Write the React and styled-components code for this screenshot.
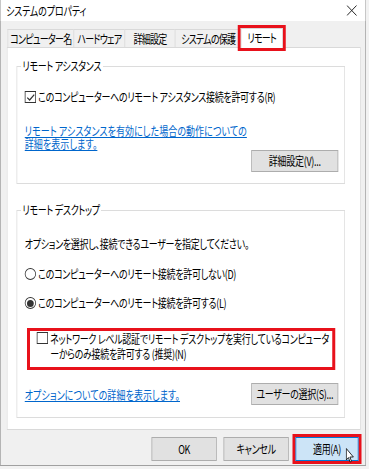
import React from 'react';
import styled, { createGlobalStyle } from 'styled-components';

// The reference shot is squeezed sideways, so the dialog is laid out at its
// natural width and compressed horizontally as a whole.
const SQUEEZE = 0.75;

const GlobalStyle = createGlobalStyle`
    html, body {
        margin: 0;
        padding: 0;
        background: #f2f2f2;
        overflow: hidden;
    }
    body {
        font-family: "Noto Sans CJK JP", "Noto Sans", sans-serif;
        font-size: 12px;
        font-feature-settings: "palt";
        color: #000;
    }
`;

const Stage = styled.div`
    width: 488px;
    transform: scaleX(${SQUEEZE});
    transform-origin: 0 0;
`;

const Window = styled.div`
    width: 488px;
    height: 466px;
    box-sizing: border-box;
    background: #f0f0f0;
    border: 1px solid #a0a0a0;
    border-width: 0 1.4px 1px 1.4px;
    display: flex;
    flex-direction: column;
`;

const TitleBar = styled.div`
    height: 21px;
    background: #fff;
    display: flex;
    align-items: center;
    justify-content: space-between;
    padding: 0 11px 0 7px;
    line-height: 14px;
`;

const Title = styled.span`
    letter-spacing: -0.2px;
`;

const Body = styled.div`
    flex: 1;
    display: flex;
    flex-direction: column;
    padding: 8px 6px 0 8px;
`;

const TabRow = styled.div`
    display: flex;
    align-items: flex-end;
    height: 18px;
    padding-left: 1px;
`;

const Tab = styled.div`
    position: relative;
    width: ${({ w }) => w}px;
    height: ${({ active }) => (active ? '20px' : '18px')};
    box-sizing: border-box;
    margin-right: -1px;
    margin-bottom: ${({ active }) => (active ? '-1px' : '0')};
    border: 1px solid #d9d9d9;
    border-width: 1px 1.3px 0 1.3px;
    background: ${({ active }) => (active ? '#fff' : '#f0f0f0')};
    line-height: 17px;
    text-align: center;
    white-space: nowrap;
    letter-spacing: -1px;
    z-index: ${({ active }) => (active ? 2 : 1)};
    box-shadow: ${({ mark }) =>
        mark ? '0 0 0 3px #e8111b, 1px 0 0 3px #e8111b, -1px 0 0 3px #e8111b' : 'none'};
`;

const Panel = styled.div`
    height: 383px;
    box-sizing: border-box;
    background: #fff;
    border: 1px solid #d9d9d9;
    border-width: 1px 1.3px;
    padding: 11px 20px 0 12px;
    display: flex;
    flex-direction: column;
`;

const Group = styled.fieldset`
    margin: ${({ gap }) => gap || 0}px 0 0 0;
    padding: 0 8px ${({ bottom }) => bottom}px 10px;
    border: 1px solid #dcdcdc;
    border-width: 1px 1.3px;
    min-width: 0;
    display: flex;
    flex-direction: column;
`;

const Legend = styled.legend`
    padding: 0 2px;
    margin-left: -5px;
    line-height: 14px;
    letter-spacing: -0.4px;
`;

const Row = styled.div`
    display: flex;
    align-items: center;
    gap: 3px;
    line-height: 14px;
    margin-top: ${({ top }) => top || 0}px;
    letter-spacing: -0.4px;
    white-space: nowrap;
`;

const Text = styled.div`
    line-height: 14px;
    margin-top: ${({ top }) => top || 0}px;
    letter-spacing: -0.4px;
`;

const Link = styled.a`
    color: #0066cc;
    text-decoration: underline;
    line-height: 13px;
    letter-spacing: 0.1px;
    display: block;
    margin-top: ${({ top }) => top || 0}px;
`;

const Box = styled.span`
    width: 15px;
    height: 12px;
    box-sizing: border-box;
    border: 1px solid #333;
    border-width: 1px 1.3px;
    flex: none;
    display: inline-flex;
    align-items: center;
    justify-content: center;
    background: #fff;
`;

const Radio = styled.span`
    width: 15px;
    height: 12px;
    box-sizing: border-box;
    border: 1px solid #333;
    border-width: 1px 1.3px;
    border-radius: 50%;
    flex: none;
    display: inline-flex;
    align-items: center;
    justify-content: center;
    background: #fff;
    &::after {
        content: '';
        width: 9px;
        height: 7px;
        border-radius: 50%;
        background: ${({ checked }) => (checked ? '#333' : 'transparent')};
    }
`;

const Highlight = styled.div`
    margin: 18px 0 0 3px;
    width: 411px;
    box-sizing: border-box;
    border: 3px solid #e8111b;
    border-width: 3px 4px;
    padding: 0 2px 6px 9px;
    display: flex;
    align-items: flex-start;
    gap: 3px;
`;

const HighlightBox = styled(Box)`
    margin-top: 1px;
`;

const HighlightText = styled.div`
    line-height: 15px;
    letter-spacing: -0.4px;
    white-space: nowrap;
`;

const Button = styled.button`
    font: inherit;
    font-feature-settings: "palt";
    letter-spacing: -0.4px;
    color: #000;
    background: ${({ primary }) => (primary ? '#cce4f7' : '#e1e1e1')};
    border: 1px solid ${({ primary }) => (primary ? '#0078d7' : '#adadad')};
    border-width: 1px 1.3px;
    width: ${({ w }) => w}px;
    height: ${({ h }) => h || 22}px;
    padding: 0;
    line-height: 14px;
    position: relative;
    flex: none;
    box-shadow: ${({ mark }) =>
        mark ? '0 0 0 3px #e8111b, 1px 0 0 3px #e8111b, -1px 0 0 3px #e8111b' : 'none'};
`;

const ButtonRow = styled.div`
    display: flex;
    justify-content: flex-end;
    margin-top: ${({ top }) => top || 0}px;
`;

const SplitRow = styled.div`
    display: flex;
    align-items: center;
    justify-content: space-between;
    margin-top: ${({ top }) => top || 0}px;
`;

const Footer = styled.div`
    display: flex;
    justify-content: flex-end;
    gap: 9px;
    padding: 7px 3px 0 0;
`;

const Cursor = styled.svg`
    position: absolute;
    left: 66px;
    top: 10px;
`;

const Check = () => (
    <svg width="12" height="9" viewBox="0 0 9 9" preserveAspectRatio="none">
        <path d="M1 4.6 L3.4 7 L8 1.6" fill="none" stroke="#333" strokeWidth="1.2" />
    </svg>
);

const CloseIcon = () => (
    <svg width="14" height="11" viewBox="0 0 11 11" preserveAspectRatio="none">
        <path d="M0.5 0.5 L10.5 10.5 M10.5 0.5 L0.5 10.5" stroke="#222" strokeWidth="1" />
    </svg>
);

const tabs = [
    { label: 'コンピューター名', w: 89 },
    { label: 'ハードウェア', w: 69 },
    { label: '詳細設定', w: 68 },
    { label: 'システムの保護', w: 89 },
    { label: 'リモート', w: 56, active: true },
];

export default function App() {
    return (
        <>
            <GlobalStyle />
            <Stage>
                <Window>
                    <TitleBar>
                        <Title>システムのプロパティ</Title>
                        <CloseIcon />
                    </TitleBar>
                    <Body>
                        <TabRow>
                            {tabs.map((t) => (
                                <Tab key={t.label} w={t.w} active={t.active} mark={t.active}>
                                    {t.label}
                                </Tab>
                            ))}
                        </TabRow>
                        <Panel>
                            <Group bottom={11}>
                                <Legend>リモート アシスタンス</Legend>
                                <Row top={17}>
                                    <Box><Check /></Box>
                                    <span>このコンピューターへのリモート アシスタンス接続を許可する(R)</span>
                                </Row>
                                <Link top={20}>
                                    リモート アシスタンスを有効にした場合の動作についての<br />詳細を表示します。
                                </Link>
                                <ButtonRow>
                                    <Button w={116}>詳細設定(V)...</Button>
                                </ButtonRow>
                            </Group>
                            <Group gap={19} bottom={12}>
                                <Legend>リモート デスクトップ</Legend>
                                <Text top={20}>オプションを選択し、接続できるユーザーを指定してください。</Text>
                                <Row top={16}>
                                    <Radio />
                                    <span>このコンピューターへのリモート接続を許可しない(D)</span>
                                </Row>
                                <Row top={15}>
                                    <Radio checked />
                                    <span>このコンピューターへのリモート接続を許可する(L)</span>
                                </Row>
                                <Highlight>
                                    <HighlightBox />
                                    <HighlightText>
                                        ネットワーク レベル認証でリモート デスクトップを実行しているコンピュータ<br />
                                        ーからのみ接続を許可する (推奨)(N)
                                    </HighlightText>
                                </Highlight>
                                <SplitRow top={13}>
                                    <Link>オプションについての詳細を表示します。</Link>
                                    <Button w={116}>ユーザーの選択(S)...</Button>
                                </SplitRow>
                            </Group>
                        </Panel>
                        <Footer>
                            <Button w={87} h={24}>OK</Button>
                            <Button w={87} h={24}>キャンセル</Button>
                            <Button w={84} h={24} primary mark>
                                適用(A)
                                <Cursor width="11" height="15" viewBox="0 0 8 15" preserveAspectRatio="none">
                                    <path d="M0.5 0.5 L0.5 12 L2.6 9.6 L4.2 14 L5.6 13.3 L4 9 L7.4 9 Z" fill="#fff" stroke="#000" strokeWidth="0.8" />
                                </Cursor>
                            </Button>
                        </Footer>
                    </Body>
                </Window>
            </Stage>
        </>
    );
}
